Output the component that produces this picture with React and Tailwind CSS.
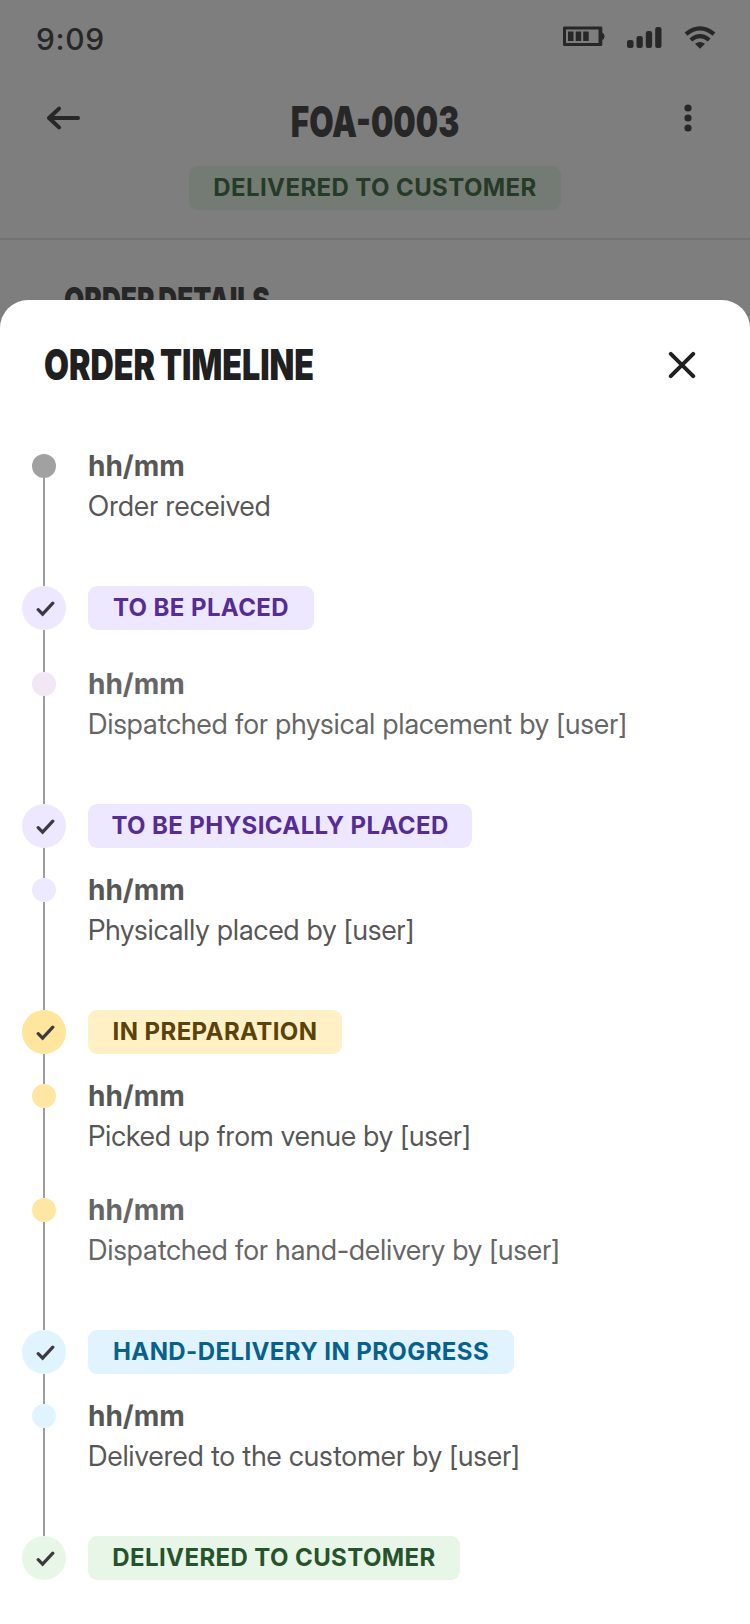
const TIMELINE = [
  { text: "Order received", dot: "bg-[#a1a1a1]", tone: "text-[#575757]", space: "pb-[60px]", first: true },
  { badge: "TO BE PLACED", circle: "bg-[#ede7ff]", pill: "bg-[#ede7ff] text-[#562c95] w-[226px]", space: "pb-[34px]" },
  { text: "Dispatched for physical placement by [user]", dot: "bg-[#f1e7f5]", tone: "text-[#666666]", space: "pb-[60px]" },
  { badge: "TO BE PHYSICALLY PLACED", circle: "bg-[#ede7ff]", pill: "bg-[#ede7ff] text-[#562c95] w-[384px]", space: "pb-[22px]" },
  { text: "Physically placed by [user]", dot: "bg-[#ede9ff]", tone: "text-[#575757]", space: "pb-[60px]" },
  { badge: "IN PREPARATION", circle: "bg-[#ffe69c]", pill: "bg-[#fff0c5] text-[#594309] w-[254px]", space: "pb-[22px]" },
  { text: "Picked up from venue by [user]", dot: "bg-[#ffe7a3]", tone: "text-[#575757]", space: "pb-[34px]" },
  { text: "Dispatched for hand-delivery by [user]", dot: "bg-[#ffe7a3]", tone: "text-[#666666]", space: "pb-[60px]" },
  { badge: "HAND-DELIVERY IN PROGRESS", circle: "bg-[#e0f4ff]", pill: "bg-[#e0f3ff] text-[#08618b] w-[426px]", space: "pb-[22px]" },
  { text: "Delivered to the customer by [user]", dot: "bg-[#e0f4fe]", tone: "text-[#575757]", space: "pb-[60px]" },
  { badge: "DELIVERED TO CUSTOMER", circle: "bg-[#e7f6e7]", pill: "bg-[#e7f6e7] text-[#26532b] w-[372px]", space: "", last: true },
];

function Check() {
  return (
    <svg className="ml-[3px] mt-[2px] h-[18px] w-[20px]" viewBox="0 0 20 18" fill="none" stroke="#3a3a40" strokeWidth="3.2" strokeLinecap="round" strokeLinejoin="miter">
      <path d="M2.2 9.7 6.6 14.1 16.8 3.2" />
    </svg>
  );
}

function Line({ className }) {
  return <div className={`w-[2px] bg-[#9b9d9f] ${className}`} />;
}

function Badge({ children, className }) {
  return (
    <div className={`flex h-[44px] items-center justify-center rounded-[9px] text-[24px] font-[650] leading-none tracking-[0.4px] whitespace-nowrap ${className}`}>
      {children}
    </div>
  );
}

function Event({ item }) {
  return (
    <li className="flex">
      <div className="flex w-[44px] flex-col items-center">
        <Line className={item.first ? "h-[8px] opacity-0" : "h-[8px]"} />
        <div className={`size-[24px] rounded-full ${item.dot}`} />
        <Line className="flex-1" />
      </div>
      <div className={`ml-[22px] text-[28px] whitespace-nowrap ${item.tone} ${item.space}`}>
        <p className="font-bold leading-[41px]">hh/mm</p>
        <p className="font-['Inter_Display','Inter',sans-serif] leading-[39px] tracking-[0.17px]">{item.text}</p>
      </div>
    </li>
  );
}

function Stage({ item }) {
  return (
    <li className="flex">
      <div className="flex w-[44px] flex-col items-center">
        <div className={`flex size-[44px] items-center justify-center rounded-full ${item.circle}`}>
          <Check />
        </div>
        {!item.last && <Line className="flex-1" />}
      </div>
      <div className={`ml-[22px] ${item.space}`}>
        <Badge className={item.pill}>{item.badge}</Badge>
      </div>
    </li>
  );
}

function StatusBar() {
  return (
    <div className="flex h-[78px] shrink-0 items-center justify-between pl-[36px] pr-[34px] text-[#272727]">
      <span className="text-[30px] font-medium leading-none tracking-[0.6px]">9:09</span>
      <div className="mb-[6px] flex items-center">
        <svg className="h-[24px] w-[42px]" viewBox="0 0 42 24" fill="currentColor">
          <path fillRule="evenodd" d="M1 2.5H38a1.3 1.3 0 0 1 1.3 1.3V20.7A1.3 1.3 0 0 1 38 22H1A1.3 1.3 0 0 1 0 20.7V3.8A1.3 1.3 0 0 1 1 2.5ZM3 5.5V19H35.5V5.5Z" />
          <path d="M5 7.5h5.5v9.5H5zM12.7 7.5h5.5v9.5h-5.5zM20.2 7.5h5.5v9.5h-5.5zM39 8.5q2.6 1 2.6 3.7T39 16z" />
        </svg>
        <svg className="ml-[22px] h-[24px] w-[35px]" viewBox="0 0 35 24" fill="currentColor">
          <rect x="0" y="16" width="6.5" height="8" rx="2.2" />
          <rect x="9.5" y="12" width="6.3" height="12" rx="2.2" />
          <rect x="18.8" y="7" width="6.3" height="17" rx="2.2" />
          <rect x="28.2" y="3" width="6.3" height="21" rx="2.2" />
        </svg>
        <svg className="ml-[22px] h-[26px] w-[32px]" viewBox="0 -1 32 26" fill="none" stroke="currentColor" strokeWidth="4.2">
          <path d="M2 10.2Q16 -1.4 30 10.2" />
          <path d="M6.8 16Q16 8.2 25.2 16" />
          <path d="M11 19.8Q16 16.4 21 19.8L16 24.8Z" fill="currentColor" stroke="none" />
        </svg>
      </div>
    </div>
  );
}

export default function App() {
  return (
    <div className="h-[1624px] w-[750px] overflow-hidden bg-[#7e7e7e] font-['Inter','Liberation_Sans',sans-serif]">
      <header className="flex h-[300px] flex-col overflow-hidden">
        <StatusBar />
        <div className="flex h-[88px] shrink-0 items-start justify-between pl-[46px] pr-[58px] pt-[22px] text-[#272727]">
          <svg className="mt-[6px] h-[24px] w-[36px]" viewBox="0 0 36 24" fill="none" stroke="currentColor" strokeWidth="4" strokeLinecap="round" strokeLinejoin="round">
            <path d="M32 12H3M13 2.6 3 12 13 21.4" />
          </svg>
          <h1 className="mr-[16px] flex h-[44px] w-[180px] scale-x-[0.75] items-center justify-center whitespace-nowrap text-[42px] font-black leading-none">
            FOA-0003
          </h1>
          <svg className="mt-[2px] h-[32px] w-[8px]" viewBox="0 0 8 32" fill="currentColor">
            <circle cx="4" cy="6" r="3.6" />
            <circle cx="4" cy="16" r="3.6" />
            <circle cx="4" cy="26" r="3.6" />
          </svg>
        </div>
        <div className="flex h-[72px] shrink-0 justify-center">
          <Badge className="w-[372px] bg-[#747b74] text-[#263a28]">DELIVERED TO CUSTOMER</Badge>
        </div>
        <div className="h-[2px] shrink-0 bg-[#737373]" />
        <h2 className="ml-[63.5px] mt-[40px] h-[40px] shrink-0 origin-left scale-x-[0.75] whitespace-nowrap text-[35px] font-black leading-[40px] text-[#272727] [word-spacing:-2px]">
          ORDER DETAILS
        </h2>
      </header>
      <section className="h-[1324px] rounded-t-[28px] bg-white">
        <div className="flex h-[146px] items-start justify-between pl-[43.5px] pr-[54px] pt-[42px] text-[#202020]">
          <h2 className="flex h-[46px] origin-left scale-x-[0.767] items-center whitespace-nowrap text-[42px] font-black leading-none [word-spacing:-2px]">
            ORDER TIMELINE
          </h2>
          <svg className="mt-[9px] size-[28px]" viewBox="0 0 28 28" fill="none" stroke="currentColor" strokeWidth="4" strokeLinecap="round">
            <path d="M2.8 2.8 25.2 25.2M25.2 2.8 2.8 25.2" />
          </svg>
        </div>
        <ul className="flex flex-col pl-[22px]">
          {TIMELINE.map((item, i) => (item.badge ? <Stage key={i} item={item} /> : <Event key={i} item={item} />))}
        </ul>
      </section>
    </div>
  );
}
